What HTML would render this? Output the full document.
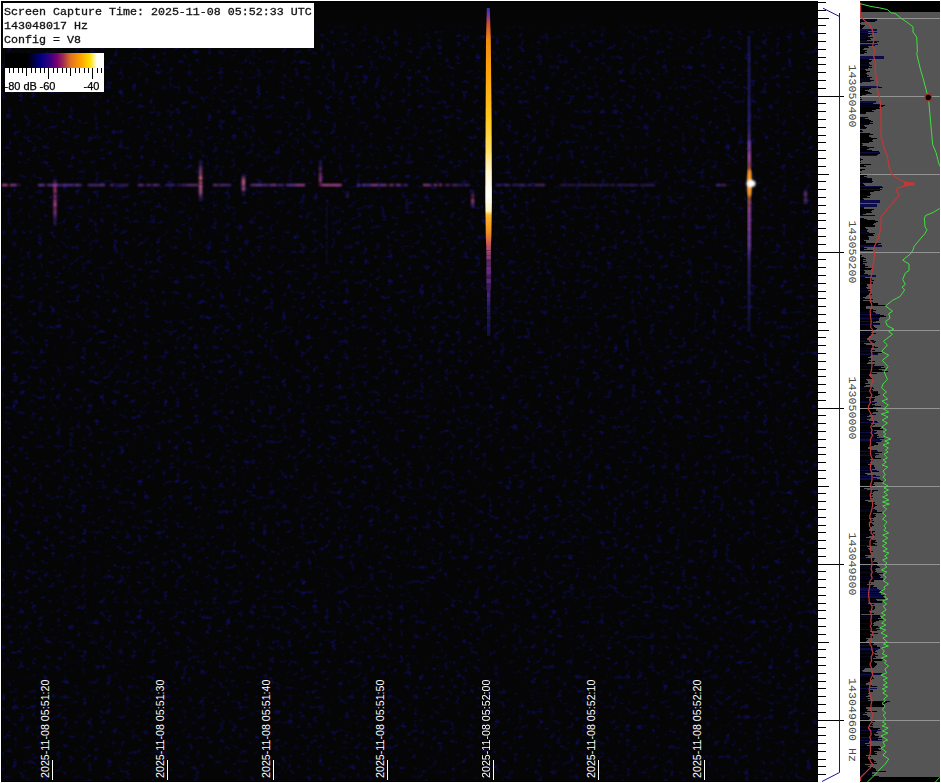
<!DOCTYPE html><html><head><meta charset="utf-8"><title>Spectrogram</title><style>html,body{margin:0;padding:0;width:941px;height:783px;overflow:hidden;background:#fff;}svg{position:absolute;left:0;top:0;display:block}.mono{font-family:"Liberation Mono",monospace}.sans{font-family:"Liberation Sans",sans-serif}</style></head><body>
<svg width="941" height="783" viewBox="0 0 941 783">
<defs><filter id="bf" x="-20%" y="-20%" width="140%" height="140%"><feGaussianBlur stdDeviation="1.0"/></filter><filter id="b1" x="-20%" y="-20%" width="140%" height="140%"><feGaussianBlur stdDeviation="0.7"/></filter><filter id="b2" x="-100%" y="-5%" width="300%" height="110%"><feGaussianBlur stdDeviation="0.9"/></filter><filter id="b3" x="-50%" y="-50%" width="200%" height="200%"><feGaussianBlur stdDeviation="1.5"/></filter><linearGradient id="cbar" x1="0" x2="1" y1="0" y2="0"><stop offset="0" stop-color="#000"/><stop offset="0.22" stop-color="#000"/><stop offset="0.36" stop-color="#000080"/><stop offset="0.46" stop-color="#3a0080"/><stop offset="0.53" stop-color="#800070"/><stop offset="0.59" stop-color="#a03050"/><stop offset="0.66" stop-color="#e07020"/><stop offset="0.76" stop-color="#ffa000"/><stop offset="0.86" stop-color="#ffe000"/><stop offset="0.93" stop-color="#fff"/><stop offset="1" stop-color="#fff"/></linearGradient><linearGradient id="streak" x1="0" x2="0" y1="0" y2="1" gradientUnits="userSpaceOnUse" ></linearGradient></defs>
<rect x="1" y="1" width="817" height="781" fill="#000"/>
<rect x="2" y="2" width="815" height="779" fill="#050506"/>
<defs><filter id="nz" x="0" y="0" width="100%" height="100%" color-interpolation-filters="sRGB"><feTurbulence type="fractalNoise" baseFrequency="0.16 0.2" numOctaves="2" seed="4" result="t"/><feColorMatrix in="t" type="matrix" values="0 0 0 0 0.05  0 0 0 0 0.05  0 0 0 0 0.37  3 0 0 0 -1.72"/><feGaussianBlur stdDeviation="0.55"/></filter></defs>
<rect x="2" y="23" width="815" height="758" filter="url(#nz)"/>
<defs><linearGradient id="fade" x1="0" y1="0" x2="0" y2="1"><stop offset="0" stop-color="#050506" stop-opacity="1"/><stop offset="1" stop-color="#050506" stop-opacity="0"/></linearGradient></defs>
<rect x="2" y="22" width="815" height="12" fill="url(#fade)"/>
<g filter="url(#bf)"><rect x="2" y="184.2" width="4" height="1.8" fill="#e058b0" opacity="1.00"/><rect x="6" y="184.2" width="2" height="1.8" fill="#e058b0" opacity="0.86"/><rect x="10" y="184.2" width="2" height="1.8" fill="#e058b0" opacity="0.93"/><rect x="12" y="184.2" width="5" height="1.8" fill="#a44ac0" opacity="0.94"/><rect x="19" y="184.2" width="1" height="1.8" fill="#5b3ad4" opacity="1.00"/><rect x="38" y="184.2" width="7" height="1.8" fill="#8644c8" opacity="0.93"/><rect x="47" y="184.2" width="5" height="1.8" fill="#723fce" opacity="0.94"/><rect x="52" y="184.2" width="6" height="1.8" fill="#b24dbc" opacity="0.77"/><rect x="58" y="184.2" width="6" height="1.8" fill="#5d3bd4" opacity="0.78"/><rect x="64" y="184.2" width="2" height="1.8" fill="#9346c5" opacity="0.92"/><rect x="66" y="184.2" width="2" height="1.8" fill="#8f46c6" opacity="0.68"/><rect x="68" y="184.2" width="6" height="1.8" fill="#673dd1" opacity="0.94"/><rect x="75" y="184.2" width="4" height="1.8" fill="#8543c9" opacity="1.00"/><rect x="79" y="184.2" width="3" height="1.8" fill="#6c3ed0" opacity="0.73"/><rect x="88" y="184.2" width="2" height="1.8" fill="#8143ca" opacity="0.77"/><rect x="90" y="184.2" width="7" height="1.8" fill="#7640cd" opacity="0.80"/><rect x="97" y="184.2" width="2" height="1.8" fill="#7c41cb" opacity="0.63"/><rect x="99" y="184.2" width="3" height="1.8" fill="#a049c1" opacity="0.73"/><rect x="102" y="184.2" width="3" height="1.8" fill="#8143ca" opacity="0.90"/><rect x="110" y="184.2" width="4" height="1.8" fill="#8c45c7" opacity="0.68"/><rect x="116" y="184.2" width="5" height="1.8" fill="#5539d6" opacity="0.52"/><rect x="121" y="184.2" width="5" height="1.8" fill="#8c45c7" opacity="0.51"/><rect x="126" y="184.2" width="2" height="1.8" fill="#8143ca" opacity="0.71"/><rect x="138" y="184.2" width="4" height="1.8" fill="#8d45c6" opacity="0.84"/><rect x="142" y="184.2" width="2" height="1.8" fill="#a14ac1" opacity="0.65"/><rect x="146" y="184.2" width="2" height="1.8" fill="#7a41cc" opacity="0.60"/><rect x="148" y="184.2" width="3" height="1.8" fill="#8f46c6" opacity="0.67"/><rect x="152" y="184.2" width="2" height="1.8" fill="#5e3bd4" opacity="0.67"/><rect x="154" y="184.2" width="3" height="1.8" fill="#9647c4" opacity="0.83"/><rect x="157" y="184.2" width="3" height="1.8" fill="#733fce" opacity="0.65"/><rect x="165" y="184.2" width="3" height="1.8" fill="#5d3ad4" opacity="0.54"/><rect x="168" y="184.2" width="7" height="1.8" fill="#643cd2" opacity="0.64"/><rect x="177" y="184.2" width="3" height="1.8" fill="#663dd1" opacity="0.49"/><rect x="181" y="184.2" width="6" height="1.8" fill="#6f3fcf" opacity="0.67"/><rect x="187" y="184.2" width="7" height="1.8" fill="#9a48c3" opacity="0.79"/><rect x="194" y="184.2" width="4" height="1.8" fill="#9d49c2" opacity="0.74"/><rect x="213" y="184.2" width="5" height="1.8" fill="#8944c8" opacity="0.82"/><rect x="219" y="184.2" width="7" height="1.8" fill="#8944c7" opacity="0.73"/><rect x="226" y="184.2" width="5" height="1.8" fill="#673dd1" opacity="0.79"/><rect x="250" y="184.2" width="2" height="1.8" fill="#5038d7" opacity="0.80"/><rect x="252" y="184.2" width="4" height="1.8" fill="#a84bbf" opacity="0.76"/><rect x="256" y="184.2" width="6" height="1.8" fill="#8644c8" opacity="1.00"/><rect x="262" y="184.2" width="6" height="1.8" fill="#8443c9" opacity="0.79"/><rect x="269" y="184.2" width="5" height="1.8" fill="#9547c4" opacity="0.88"/><rect x="274" y="184.2" width="2" height="1.8" fill="#bb4fba" opacity="1.00"/><rect x="277" y="184.2" width="7" height="1.8" fill="#673dd1" opacity="0.74"/><rect x="286" y="184.2" width="4" height="1.8" fill="#653cd2" opacity="0.99"/><rect x="290" y="184.2" width="6" height="1.8" fill="#7a41cc" opacity="1.00"/><rect x="296" y="184.2" width="7" height="1.8" fill="#c953b6" opacity="0.98"/><rect x="303" y="184.2" width="2" height="1.8" fill="#bf50b9" opacity="0.99"/><rect x="322" y="184.2" width="4" height="1.8" fill="#e058b0" opacity="1.00"/><rect x="326" y="184.2" width="3" height="1.8" fill="#e058b0" opacity="1.00"/><rect x="329" y="184.2" width="3" height="1.8" fill="#c752b6" opacity="1.00"/><rect x="332" y="184.2" width="2" height="1.8" fill="#e058b0" opacity="1.00"/><rect x="334" y="184.2" width="7" height="1.8" fill="#db56b1" opacity="1.00"/><rect x="341" y="184.2" width="1" height="1.8" fill="#623cd2" opacity="0.87"/><rect x="357" y="184.2" width="3" height="1.8" fill="#7b41cb" opacity="0.91"/><rect x="362" y="184.2" width="2" height="1.8" fill="#8e45c6" opacity="0.99"/><rect x="364" y="184.2" width="7" height="1.8" fill="#5f3bd3" opacity="0.87"/><rect x="371" y="184.2" width="5" height="1.8" fill="#c351b7" opacity="0.89"/><rect x="376" y="184.2" width="2" height="1.8" fill="#b74fbb" opacity="1.00"/><rect x="379" y="184.2" width="5" height="1.8" fill="#8443c9" opacity="1.00"/><rect x="384" y="184.2" width="3" height="1.8" fill="#d054b4" opacity="0.70"/><rect x="389" y="184.2" width="5" height="1.8" fill="#b84fba" opacity="0.76"/><rect x="396" y="184.2" width="5" height="1.8" fill="#a54ac0" opacity="0.85"/><rect x="403" y="184.2" width="5" height="1.8" fill="#603bd3" opacity="0.70"/><rect x="423" y="184.2" width="6" height="1.8" fill="#e058b0" opacity="0.80"/><rect x="429" y="184.2" width="3" height="1.8" fill="#5539d6" opacity="0.83"/><rect x="434" y="184.2" width="3" height="1.8" fill="#e058b0" opacity="0.89"/><rect x="439" y="184.2" width="3" height="1.8" fill="#e058b0" opacity="0.76"/><rect x="445" y="184.2" width="5" height="1.8" fill="#8944c8" opacity="0.63"/><rect x="452" y="184.2" width="5" height="1.8" fill="#9747c4" opacity="0.64"/><rect x="457" y="184.2" width="6" height="1.8" fill="#5d3ad4" opacity="0.54"/><rect x="464" y="184.2" width="3" height="1.8" fill="#8443c9" opacity="0.61"/><rect x="467" y="184.2" width="3" height="1.8" fill="#5c3ad4" opacity="0.57"/><rect x="496" y="184.2" width="6" height="1.8" fill="#5539d6" opacity="0.65"/><rect x="504" y="184.2" width="6" height="1.8" fill="#7941cc" opacity="0.68"/><rect x="512" y="184.2" width="2" height="1.8" fill="#653cd2" opacity="0.53"/><rect x="514" y="184.2" width="6" height="1.8" fill="#7740cd" opacity="0.45"/><rect x="520" y="184.2" width="5" height="1.8" fill="#6c3ed0" opacity="0.73"/><rect x="527" y="184.2" width="6" height="1.8" fill="#613bd3" opacity="0.53"/><rect x="535" y="184.2" width="6" height="1.8" fill="#9547c4" opacity="0.60"/><rect x="541" y="184.2" width="4" height="1.8" fill="#7d42cb" opacity="0.71"/><rect x="560" y="184.2" width="6" height="1.8" fill="#9046c6" opacity="0.37"/><rect x="567" y="184.2" width="3" height="1.8" fill="#6d3ecf" opacity="0.41"/><rect x="570" y="184.2" width="2" height="1.8" fill="#8042ca" opacity="0.42"/><rect x="572" y="184.2" width="7" height="1.8" fill="#653cd1" opacity="0.35"/><rect x="579" y="184.2" width="7" height="1.8" fill="#7e42cb" opacity="0.40"/><rect x="586" y="184.2" width="3" height="1.8" fill="#9547c4" opacity="0.37"/><rect x="589" y="184.2" width="5" height="1.8" fill="#8f46c6" opacity="0.36"/><rect x="594" y="184.2" width="3" height="1.8" fill="#8243c9" opacity="0.54"/><rect x="598" y="184.2" width="4" height="1.8" fill="#6e3ecf" opacity="0.40"/><rect x="602" y="184.2" width="7" height="1.8" fill="#6a3dd0" opacity="0.40"/><rect x="610" y="184.2" width="5" height="1.8" fill="#8243c9" opacity="0.41"/><rect x="617" y="184.2" width="6" height="1.8" fill="#653cd2" opacity="0.53"/><rect x="623" y="184.2" width="3" height="1.8" fill="#9547c4" opacity="0.35"/><rect x="626" y="184.2" width="4" height="1.8" fill="#5238d7" opacity="0.49"/><rect x="630" y="184.2" width="3" height="1.8" fill="#8b45c7" opacity="0.51"/><rect x="633" y="184.2" width="5" height="1.8" fill="#5a3ad5" opacity="0.52"/><rect x="640" y="184.2" width="5" height="1.8" fill="#8243c9" opacity="0.34"/><rect x="645" y="184.2" width="7" height="1.8" fill="#5d3ad4" opacity="0.52"/><rect x="652" y="184.2" width="2" height="1.8" fill="#7d42cb" opacity="0.50"/><rect x="654" y="184.2" width="1" height="1.8" fill="#8d45c6" opacity="0.34"/><rect x="716" y="184.2" width="5" height="1.8" fill="#5138d7" opacity="0.94"/><rect x="722" y="184.2" width="4" height="1.8" fill="#a94bbf" opacity="0.58"/><rect x="53.6" y="179" width="2.8" height="1" fill="#3434c8" opacity="0.47"/><rect x="53.6" y="180" width="2.8" height="1" fill="#4f38c4" opacity="0.37"/><rect x="53.6" y="181" width="2.8" height="2" fill="#6a3dc0" opacity="0.51"/><rect x="53.6" y="183" width="2.8" height="2" fill="#a146b8" opacity="0.62"/><rect x="53.6" y="185" width="2.8" height="2" fill="#d850b0" opacity="0.70"/><rect x="53.6" y="187" width="2.8" height="2" fill="#d850b0" opacity="0.58"/><rect x="53.6" y="189" width="2.8" height="2" fill="#d850b0" opacity="0.77"/><rect x="53.6" y="191" width="2.8" height="3" fill="#d850b0" opacity="0.61"/><rect x="53.6" y="195" width="2.8" height="3" fill="#d850b0" opacity="0.78"/><rect x="53.6" y="199" width="2.8" height="2" fill="#d850b0" opacity="0.83"/><rect x="53.6" y="201" width="2.8" height="2" fill="#d850b0" opacity="0.65"/><rect x="53.6" y="203" width="2.8" height="3" fill="#d850b0" opacity="0.95"/><rect x="53.6" y="206" width="2.8" height="2" fill="#cf4eb1" opacity="0.56"/><rect x="53.6" y="208" width="2.8" height="3" fill="#bf4bb3" opacity="0.58"/><rect x="53.6" y="211" width="2.8" height="3" fill="#a647b7" opacity="0.77"/><rect x="53.6" y="214" width="2.8" height="2" fill="#8e43ba" opacity="0.65"/><rect x="53.6" y="216" width="2.8" height="3" fill="#7d40bd" opacity="0.46"/><rect x="53.6" y="219" width="2.8" height="3" fill="#653cc0" opacity="0.37"/><rect x="53.6" y="222" width="2.8" height="2" fill="#4c38c4" opacity="0.54"/><rect x="53.6" y="224" width="2.8" height="2" fill="#3c35c6" opacity="0.31"/><rect x="199.0" y="160" width="3.2" height="2" fill="#3434c8" opacity="0.37"/><rect x="199.0" y="162" width="3.2" height="2" fill="#4d3cc2" opacity="0.43"/><rect x="199.0" y="165" width="3.2" height="2" fill="#7248ba" opacity="0.53"/><rect x="199.0" y="167" width="3.2" height="2" fill="#8b50b5" opacity="0.59"/><rect x="199.0" y="169" width="3.2" height="1" fill="#a458b0" opacity="0.56"/><rect x="199.0" y="170" width="3.2" height="2" fill="#b15cad" opacity="0.63"/><rect x="199.0" y="172" width="3.2" height="3" fill="#ca64a8" opacity="0.55"/><rect x="199.0" y="175" width="3.2" height="2" fill="#f070a0" opacity="0.63"/><rect x="199.0" y="177" width="3.2" height="3" fill="#f070a0" opacity="0.91"/><rect x="199.0" y="181" width="3.2" height="2" fill="#f070a0" opacity="0.71"/><rect x="199.0" y="183" width="3.2" height="1" fill="#f070a0" opacity="0.93"/><rect x="199.0" y="185" width="3.2" height="2" fill="#f070a0" opacity="0.96"/><rect x="199.0" y="187" width="3.2" height="2" fill="#f070a0" opacity="0.63"/><rect x="199.0" y="189" width="3.2" height="2" fill="#d567a5" opacity="0.79"/><rect x="199.0" y="191" width="3.2" height="3" fill="#ba5eab" opacity="0.80"/><rect x="199.0" y="194" width="3.2" height="1" fill="#9252b4" opacity="0.64"/><rect x="199.0" y="195" width="3.2" height="3" fill="#844db6" opacity="0.50"/><rect x="199.0" y="199" width="3.2" height="1" fill="#4e3cc2" opacity="0.51"/><rect x="199.0" y="200" width="3.2" height="1" fill="#4138c5" opacity="0.48"/><rect x="208.1" y="130" width="1.0" height="2" fill="#3434c8" opacity="0.14"/><rect x="208.1" y="132" width="1.0" height="2" fill="#3434c8" opacity="0.13"/><rect x="208.1" y="134" width="1.0" height="2" fill="#3434c8" opacity="0.13"/><rect x="208.1" y="137" width="1.0" height="3" fill="#3434c8" opacity="0.14"/><rect x="208.1" y="140" width="1.0" height="3" fill="#3434c8" opacity="0.14"/><rect x="208.1" y="143" width="1.0" height="1" fill="#3434c8" opacity="0.13"/><rect x="208.1" y="144" width="1.0" height="1" fill="#3434c8" opacity="0.13"/><rect x="208.1" y="145" width="1.0" height="2" fill="#3434c8" opacity="0.13"/><rect x="208.1" y="147" width="1.0" height="2" fill="#3434c8" opacity="0.09"/><rect x="208.1" y="149" width="1.0" height="3" fill="#3434c8" opacity="0.11"/><rect x="208.1" y="152" width="1.0" height="2" fill="#3434c8" opacity="0.13"/><rect x="208.1" y="154" width="1.0" height="2" fill="#3434c8" opacity="0.12"/><rect x="208.1" y="157" width="1.0" height="1" fill="#3434c8" opacity="0.15"/><rect x="208.1" y="158" width="1.0" height="2" fill="#3434c8" opacity="0.15"/><rect x="208.1" y="161" width="1.0" height="1" fill="#3434c8" opacity="0.11"/><rect x="208.1" y="162" width="1.0" height="3" fill="#3434c8" opacity="0.15"/><rect x="208.1" y="166" width="1.0" height="2" fill="#3434c8" opacity="0.14"/><rect x="208.1" y="168" width="1.0" height="1" fill="#3434c8" opacity="0.12"/><rect x="208.1" y="169" width="1.0" height="2" fill="#3434c8" opacity="0.15"/><rect x="208.1" y="171" width="1.0" height="2" fill="#3434c8" opacity="0.14"/><rect x="208.1" y="173" width="1.0" height="2" fill="#3434c8" opacity="0.12"/><rect x="208.1" y="176" width="1.0" height="3" fill="#3434c8" opacity="0.09"/><rect x="208.1" y="179" width="1.0" height="3" fill="#3434c8" opacity="0.13"/><rect x="208.1" y="183" width="1.0" height="2" fill="#3434c8" opacity="0.13"/><rect x="208.1" y="186" width="1.0" height="2" fill="#3434c8" opacity="0.11"/><rect x="208.1" y="188" width="1.0" height="2" fill="#3434c8" opacity="0.09"/><rect x="208.1" y="190" width="1.0" height="3" fill="#3434c8" opacity="0.10"/><rect x="208.1" y="193" width="1.0" height="1" fill="#3434c8" opacity="0.14"/><rect x="208.1" y="194" width="1.0" height="2" fill="#3434c8" opacity="0.11"/><rect x="208.1" y="197" width="1.0" height="3" fill="#3434c8" opacity="0.15"/><rect x="208.1" y="200" width="1.0" height="2" fill="#3434c8" opacity="0.15"/><rect x="208.1" y="202" width="1.0" height="1" fill="#3434c8" opacity="0.11"/><rect x="208.1" y="203" width="1.0" height="2" fill="#3434c8" opacity="0.13"/><rect x="208.1" y="205" width="1.0" height="2" fill="#3434c8" opacity="0.15"/><rect x="208.1" y="208" width="1.0" height="2" fill="#3434c8" opacity="0.10"/><rect x="208.1" y="210" width="1.0" height="3" fill="#3434c8" opacity="0.14"/><rect x="208.1" y="214" width="1.0" height="2" fill="#3434c8" opacity="0.13"/><rect x="208.1" y="216" width="1.0" height="3" fill="#3434c8" opacity="0.12"/><rect x="208.1" y="219" width="1.0" height="2" fill="#3434c8" opacity="0.12"/><rect x="208.1" y="221" width="1.0" height="2" fill="#3434c8" opacity="0.12"/><rect x="208.1" y="223" width="1.0" height="2" fill="#3434c8" opacity="0.11"/><rect x="208.1" y="225" width="1.0" height="3" fill="#3434c8" opacity="0.13"/><rect x="208.1" y="228" width="1.0" height="3" fill="#3434c8" opacity="0.12"/><rect x="208.1" y="232" width="1.0" height="1" fill="#3434c8" opacity="0.10"/><rect x="208.1" y="233" width="1.0" height="1" fill="#3434c8" opacity="0.10"/><rect x="208.1" y="235" width="1.0" height="2" fill="#3434c8" opacity="0.12"/><rect x="208.1" y="237" width="1.0" height="3" fill="#3434c8" opacity="0.12"/><rect x="208.1" y="240" width="1.0" height="2" fill="#3434c8" opacity="0.10"/><rect x="208.1" y="242" width="1.0" height="1" fill="#3434c8" opacity="0.11"/><rect x="208.1" y="243" width="1.0" height="2" fill="#3434c8" opacity="0.14"/><rect x="208.1" y="245" width="1.0" height="1" fill="#3434c8" opacity="0.13"/><rect x="208.1" y="247" width="1.0" height="3" fill="#3434c8" opacity="0.11"/><rect x="241.9" y="174" width="3.2" height="3" fill="#3434c8" opacity="0.35"/><rect x="241.9" y="177" width="3.2" height="3" fill="#c161aa" opacity="0.62"/><rect x="241.9" y="180" width="3.2" height="2" fill="#f070a0" opacity="0.87"/><rect x="241.9" y="182" width="3.2" height="1" fill="#f070a0" opacity="0.71"/><rect x="241.9" y="183" width="3.2" height="3" fill="#f070a0" opacity="0.76"/><rect x="241.9" y="187" width="3.2" height="3" fill="#c662a8" opacity="0.87"/><rect x="241.9" y="190" width="3.2" height="2" fill="#874eb6" opacity="0.44"/><rect x="241.9" y="193" width="3.2" height="3" fill="#483ac3" opacity="0.33"/><rect x="319.1" y="160" width="2.6" height="3" fill="#3434c8" opacity="0.45"/><rect x="319.1" y="163" width="2.6" height="1" fill="#5239c3" opacity="0.37"/><rect x="319.1" y="164" width="2.6" height="1" fill="#5d3bc2" opacity="0.55"/><rect x="319.1" y="166" width="2.6" height="1" fill="#713ebf" opacity="0.51"/><rect x="319.1" y="167" width="2.6" height="1" fill="#7b40bd" opacity="0.59"/><rect x="319.1" y="168" width="2.6" height="1" fill="#8642bc" opacity="0.58"/><rect x="319.1" y="169" width="2.6" height="2" fill="#9043ba" opacity="0.60"/><rect x="319.1" y="172" width="2.6" height="1" fill="#af49b6" opacity="0.50"/><rect x="319.1" y="173" width="2.6" height="2" fill="#b94ab4" opacity="0.62"/><rect x="319.1" y="175" width="2.6" height="1" fill="#cd4eb1" opacity="0.53"/><rect x="319.1" y="176" width="2.6" height="3" fill="#d850b0" opacity="0.64"/><rect x="319.1" y="179" width="2.6" height="2" fill="#d850b0" opacity="0.71"/><rect x="319.1" y="181" width="2.6" height="2" fill="#d850b0" opacity="0.55"/><rect x="319.1" y="184" width="2.6" height="2" fill="#d850b0" opacity="0.56"/><rect x="325.7" y="200" width="2.0" height="3" fill="#3434c8" opacity="0.21"/><rect x="325.7" y="204" width="2.0" height="1" fill="#3434c8" opacity="0.16"/><rect x="325.7" y="206" width="2.0" height="2" fill="#3434c8" opacity="0.16"/><rect x="325.7" y="208" width="2.0" height="2" fill="#3434c8" opacity="0.20"/><rect x="325.7" y="210" width="2.0" height="3" fill="#3434c8" opacity="0.15"/><rect x="325.7" y="213" width="2.0" height="1" fill="#3434c8" opacity="0.15"/><rect x="325.7" y="214" width="2.0" height="2" fill="#3434c8" opacity="0.20"/><rect x="325.7" y="216" width="2.0" height="2" fill="#3434c8" opacity="0.18"/><rect x="325.7" y="218" width="2.0" height="2" fill="#3434c8" opacity="0.14"/><rect x="325.7" y="221" width="2.0" height="2" fill="#3434c8" opacity="0.22"/><rect x="325.7" y="224" width="2.0" height="3" fill="#3434c8" opacity="0.22"/><rect x="325.7" y="227" width="2.0" height="2" fill="#3434c8" opacity="0.22"/><rect x="325.7" y="229" width="2.0" height="2" fill="#3434c8" opacity="0.14"/><rect x="325.7" y="231" width="2.0" height="3" fill="#3434c8" opacity="0.14"/><rect x="325.7" y="234" width="2.0" height="2" fill="#3434c8" opacity="0.17"/><rect x="325.7" y="236" width="2.0" height="1" fill="#3434c8" opacity="0.22"/><rect x="325.7" y="237" width="2.0" height="2" fill="#3434c8" opacity="0.15"/><rect x="325.7" y="240" width="2.0" height="1" fill="#3434c8" opacity="0.16"/><rect x="325.7" y="242" width="2.0" height="2" fill="#3434c8" opacity="0.22"/><rect x="325.7" y="245" width="2.0" height="2" fill="#3434c8" opacity="0.14"/><rect x="325.7" y="247" width="2.0" height="2" fill="#3434c8" opacity="0.14"/><rect x="325.7" y="250" width="2.0" height="1" fill="#3434c8" opacity="0.19"/><rect x="325.7" y="251" width="2.0" height="3" fill="#3434c8" opacity="0.17"/><rect x="325.7" y="254" width="2.0" height="3" fill="#3434c8" opacity="0.14"/><rect x="325.7" y="258" width="2.0" height="2" fill="#3434c8" opacity="0.17"/><rect x="325.7" y="261" width="2.0" height="2" fill="#3434c8" opacity="0.16"/><rect x="346.2" y="191" width="2.5" height="1" fill="#3434c8" opacity="0.30"/><rect x="346.2" y="192" width="2.5" height="3" fill="#4a36c0" opacity="0.32"/><rect x="346.2" y="195" width="2.5" height="3" fill="#6038b8" opacity="0.44"/><rect x="405.4" y="199" width="2.5" height="2" fill="#3434c8" opacity="0.20"/><rect x="405.4" y="201" width="2.5" height="2" fill="#3434c8" opacity="0.22"/><rect x="405.4" y="203" width="2.5" height="1" fill="#3434c8" opacity="0.21"/><rect x="405.4" y="204" width="2.5" height="2" fill="#3434c8" opacity="0.22"/><rect x="405.4" y="206" width="2.5" height="1" fill="#3434c8" opacity="0.28"/><rect x="405.4" y="207" width="2.5" height="3" fill="#3434c8" opacity="0.27"/><rect x="471.3" y="190" width="2.8" height="3" fill="#3434c8" opacity="0.44"/><rect x="471.3" y="194" width="2.8" height="3" fill="#b74ab4" opacity="0.56"/><rect x="471.3" y="198" width="2.8" height="2" fill="#d850b0" opacity="0.57"/><rect x="471.3" y="200" width="2.8" height="2" fill="#d850b0" opacity="0.80"/><rect x="471.3" y="202" width="2.8" height="2" fill="#a948b6" opacity="0.64"/><rect x="471.3" y="204" width="2.8" height="2" fill="#7a40bd" opacity="0.51"/><rect x="471.3" y="206" width="2.8" height="2" fill="#4b38c4" opacity="0.41"/><rect x="804.0" y="189" width="3.0" height="3" fill="#3434c8" opacity="0.37"/><rect x="804.0" y="192" width="3.0" height="2" fill="#7f43b6" opacity="0.78"/><rect x="804.0" y="194" width="3.0" height="1" fill="#9848b0" opacity="0.64"/><rect x="804.0" y="195" width="3.0" height="2" fill="#9848b0" opacity="0.57"/><rect x="804.0" y="198" width="3.0" height="3" fill="#9848b0" opacity="0.60"/><rect x="804.0" y="201" width="3.0" height="3" fill="#5c3cbe" opacity="0.49"/></g>
<defs><linearGradient id="g1" x1="0" y1="8" x2="0" y2="336" gradientUnits="userSpaceOnUse"><stop offset="0.0000" stop-color="#3030b0"/><stop offset="0.0183" stop-color="#7030a0"/><stop offset="0.0488" stop-color="#d05030"/><stop offset="0.0976" stop-color="#f08a10"/><stop offset="0.2195" stop-color="#ffa810"/><stop offset="0.3415" stop-color="#ffc820"/><stop offset="0.4329" stop-color="#ffe060"/><stop offset="0.5000" stop-color="#fff8d0"/><stop offset="0.5701" stop-color="#ffffff"/><stop offset="0.6189" stop-color="#fff4c0"/><stop offset="0.6311" stop-color="#ffb828"/><stop offset="0.6829" stop-color="#f09020"/><stop offset="0.7256" stop-color="#c05060"/><stop offset="0.7561" stop-color="#9038a0"/><stop offset="0.8049" stop-color="#8030a0"/><stop offset="0.8902" stop-color="#4a2ab0"/><stop offset="1.0000" stop-color="#1c1c90"/></linearGradient><linearGradient id="g2" x1="0" y1="36" x2="0" y2="332" gradientUnits="userSpaceOnUse"><stop offset="0.0000" stop-color="#202090"/><stop offset="0.3176" stop-color="#4030b0"/><stop offset="0.3750" stop-color="#8040b0"/><stop offset="0.4426" stop-color="#d06040"/><stop offset="0.4966" stop-color="#ffc040"/><stop offset="0.5473" stop-color="#d06040"/><stop offset="0.6993" stop-color="#8040b0"/><stop offset="0.7635" stop-color="#5030b0"/><stop offset="1.0000" stop-color="#202090"/></linearGradient></defs>
<g filter="url(#b1)"><path d="M486.8 8 L489.8 8 L490.8 40 L491.6 120 L491.9 200 L491.4 236 L490.8 250 L486.4 250 L485.8 236 L485.3 200 L485.6 120 L486 40 Z" fill="url(#g1)"/></g>
<g filter="url(#bf)"><rect x="748.1" y="36" width="2" height="1" fill="#3434d0" opacity="0.56"/><rect x="748.1" y="37" width="2" height="2" fill="#3434d0" opacity="0.47"/><rect x="748.1" y="39" width="2" height="2" fill="#3434d0" opacity="0.49"/><rect x="748.1" y="41" width="2" height="2" fill="#3534d0" opacity="0.46"/><rect x="748.1" y="43" width="2" height="2" fill="#3534d1" opacity="0.46"/><rect x="748.1" y="45" width="2" height="2" fill="#3634d1" opacity="0.46"/><rect x="748.1" y="47" width="2" height="2" fill="#3634d2" opacity="0.49"/><rect x="748.1" y="49" width="2" height="3" fill="#3734d2" opacity="0.48"/><rect x="748.1" y="52" width="2" height="2" fill="#3835d3" opacity="0.54"/><rect x="748.1" y="54" width="2" height="2" fill="#3835d3" opacity="0.57"/><rect x="748.1" y="56" width="2" height="1" fill="#3935d3" opacity="0.57"/><rect x="748.1" y="57" width="2" height="1" fill="#3935d4" opacity="0.47"/><rect x="748.1" y="58" width="2" height="3" fill="#3935d4" opacity="0.62"/><rect x="748.1" y="61" width="2" height="2" fill="#3a35d4" opacity="0.61"/><rect x="748.1" y="63" width="2" height="2" fill="#3b35d5" opacity="0.46"/><rect x="748.1" y="65" width="2" height="2" fill="#3b36d5" opacity="0.50"/><rect x="748.1" y="67" width="2" height="1" fill="#3c36d5" opacity="0.50"/><rect x="748.1" y="68" width="2" height="2" fill="#3c36d6" opacity="0.64"/><rect x="748.1" y="70" width="2" height="2" fill="#3c36d6" opacity="0.56"/><rect x="748.1" y="72" width="2" height="2" fill="#3d36d6" opacity="0.55"/><rect x="748.1" y="74" width="2" height="2" fill="#3d36d7" opacity="0.62"/><rect x="748.1" y="76" width="2" height="1" fill="#3e36d7" opacity="0.49"/><rect x="748.1" y="77" width="2" height="2" fill="#3e36d7" opacity="0.52"/><rect x="748.1" y="79" width="2" height="2" fill="#3f37d8" opacity="0.54"/><rect x="748.1" y="81" width="2" height="1" fill="#3f37d8" opacity="0.52"/><rect x="748.1" y="82" width="2" height="2" fill="#4037d8" opacity="0.49"/><rect x="748.1" y="84" width="2" height="2" fill="#4037d9" opacity="0.65"/><rect x="748.1" y="86" width="2" height="2" fill="#4137d9" opacity="0.57"/><rect x="748.1" y="88" width="2" height="2" fill="#4137d9" opacity="0.52"/><rect x="748.1" y="90" width="2" height="2" fill="#4237da" opacity="0.50"/><rect x="748.1" y="92" width="2" height="1" fill="#4238da" opacity="0.66"/><rect x="748.1" y="93" width="2" height="3" fill="#4238da" opacity="0.50"/><rect x="748.1" y="96" width="2" height="1" fill="#4338db" opacity="0.66"/><rect x="748.1" y="97" width="2" height="2" fill="#4338db" opacity="0.63"/><rect x="748.1" y="99" width="2" height="1" fill="#4438dc" opacity="0.64"/><rect x="748.1" y="100" width="2" height="3" fill="#4438dc" opacity="0.65"/><rect x="748.1" y="103" width="2" height="3" fill="#4538dc" opacity="0.72"/><rect x="748.1" y="106" width="2" height="2" fill="#4639dd" opacity="0.60"/><rect x="748.1" y="108" width="2" height="1" fill="#4639dd" opacity="0.58"/><rect x="748.1" y="109" width="2" height="2" fill="#4739dd" opacity="0.60"/><rect x="748.1" y="111" width="2" height="1" fill="#4739de" opacity="0.70"/><rect x="748.1" y="112" width="2" height="2" fill="#4739de" opacity="0.66"/><rect x="748.1" y="114" width="2" height="3" fill="#4839de" opacity="0.68"/><rect x="748.1" y="117" width="2" height="2" fill="#4939df" opacity="0.73"/><rect x="748.1" y="119" width="2" height="3" fill="#4939df" opacity="0.73"/><rect x="748.1" y="122" width="2" height="3" fill="#513cdf" opacity="0.57"/><rect x="748.1" y="125" width="2" height="1" fill="#5b3fde" opacity="0.67"/><rect x="748.1" y="126" width="2" height="2" fill="#5f40dd" opacity="0.69"/><rect x="748.1" y="128" width="2" height="2" fill="#6642dc" opacity="0.63"/><rect x="748.1" y="130" width="2" height="1" fill="#6d45dc" opacity="0.76"/><rect x="748.1" y="131" width="2" height="3" fill="#7046db" opacity="0.64"/><rect x="748.1" y="134" width="2" height="2" fill="#7b49da" opacity="0.85"/><rect x="748.1" y="136" width="2" height="2" fill="#824bd9" opacity="0.71"/><rect x="748.1" y="138" width="2" height="2" fill="#894dd8" opacity="0.73"/><rect x="748.1" y="140" width="2" height="2" fill="#9050d8" opacity="0.98"/><rect x="747.7" y="142" width="3" height="1" fill="#9651d5" opacity="0.82"/><rect x="747.7" y="143" width="3" height="2" fill="#9952d4" opacity="0.79"/><rect x="747.7" y="145" width="3" height="1" fill="#a054d2" opacity="0.99"/><rect x="747.7" y="146" width="3" height="3" fill="#a354d0" opacity="0.79"/><rect x="747.7" y="149" width="3" height="3" fill="#ac57cd" opacity="0.73"/><rect x="747.7" y="152" width="3" height="2" fill="#b659c9" opacity="0.89"/><rect x="747.7" y="154" width="3" height="2" fill="#bc5bc7" opacity="0.89"/><rect x="747.7" y="156" width="3" height="2" fill="#c35cc4" opacity="0.95"/><rect x="747.7" y="158" width="3" height="2" fill="#c95ec2" opacity="0.87"/><rect x="747.7" y="160" width="3" height="1" fill="#d060c0" opacity="0.82"/><rect x="747.7" y="161" width="3" height="2" fill="#d161b3" opacity="0.82"/><rect x="747.7" y="163" width="3" height="1" fill="#d46499" opacity="0.74"/><rect x="747.7" y="164" width="3" height="2" fill="#d6668c" opacity="0.71"/><rect x="747.7" y="166" width="3" height="1" fill="#d96973" opacity="0.90"/><rect x="747.7" y="167" width="3" height="2" fill="#db6b66" opacity="0.74"/><rect x="747.7" y="169" width="3" height="3" fill="#de6e4c" opacity="0.87"/><rect x="747.7" y="172" width="3" height="2" fill="#e47c40" opacity="0.89"/><rect x="747.7" y="174" width="3" height="2" fill="#e98840" opacity="0.87"/><rect x="747.7" y="176" width="3" height="3" fill="#ee9440" opacity="0.82"/><rect x="747.7" y="179" width="3" height="2" fill="#f5a740" opacity="0.83"/><rect x="747.7" y="181" width="3" height="3" fill="#fab340" opacity="0.75"/><rect x="747.7" y="184" width="3" height="1" fill="#fcb940" opacity="0.89"/><rect x="747.7" y="185" width="3" height="3" fill="#fab340" opacity="0.84"/><rect x="747.7" y="188" width="3" height="3" fill="#f3a140" opacity="0.93"/><rect x="747.7" y="191" width="3" height="3" fill="#eb8e40" opacity="0.95"/><rect x="747.7" y="194" width="3" height="3" fill="#e47c40" opacity="0.82"/><rect x="747.7" y="197" width="3" height="1" fill="#dd6e49" opacity="0.74"/><rect x="747.7" y="198" width="3" height="3" fill="#db6c53" opacity="0.81"/><rect x="747.7" y="201" width="3" height="3" fill="#d46770" opacity="0.85"/><rect x="747.7" y="204" width="3" height="1" fill="#cd628d" opacity="0.71"/><rect x="747.7" y="205" width="3" height="2" fill="#cb6097" opacity="0.72"/><rect x="747.7" y="207" width="3" height="2" fill="#c65daa" opacity="0.93"/><rect x="747.7" y="209" width="3" height="1" fill="#c259be" opacity="0.72"/><rect x="747.7" y="210" width="3" height="3" fill="#c058c8" opacity="0.90"/><rect x="747.7" y="213" width="3" height="2" fill="#bb57c9" opacity="0.71"/><rect x="747.7" y="215" width="3" height="1" fill="#b956ca" opacity="1.00"/><rect x="747.7" y="216" width="3" height="1" fill="#b756ca" opacity="0.76"/><rect x="747.7" y="217" width="3" height="3" fill="#b656cb" opacity="0.79"/><rect x="747.7" y="220" width="3" height="2" fill="#b255cc" opacity="0.91"/><rect x="747.7" y="222" width="3" height="2" fill="#af55cd" opacity="0.72"/><rect x="747.7" y="224" width="3" height="2" fill="#ac54ce" opacity="0.88"/><rect x="747.7" y="226" width="3" height="2" fill="#aa54cf" opacity="0.75"/><rect x="747.7" y="228" width="3" height="2" fill="#a753d0" opacity="0.97"/><rect x="747.7" y="230" width="3" height="3" fill="#a453d1" opacity="0.74"/><rect x="747.7" y="233" width="3" height="3" fill="#a052d2" opacity="0.76"/><rect x="747.7" y="236" width="3" height="2" fill="#9c52d3" opacity="0.88"/><rect x="747.7" y="238" width="3" height="2" fill="#9951d4" opacity="0.80"/><rect x="747.7" y="240" width="3" height="1" fill="#9651d5" opacity="0.76"/><rect x="747.7" y="241" width="3" height="3" fill="#9550d6" opacity="0.75"/><rect x="747.7" y="244" width="3" height="2" fill="#9150d7" opacity="0.90"/><rect x="747.7" y="246" width="3" height="3" fill="#8c4fd7" opacity="0.74"/><rect x="747.7" y="249" width="3" height="2" fill="#834cd6" opacity="0.70"/><rect x="748.1" y="251" width="2" height="1" fill="#7c4ad5" opacity="0.83"/><rect x="748.1" y="252" width="2" height="2" fill="#7949d4" opacity="0.91"/><rect x="748.1" y="254" width="2" height="3" fill="#7347d3" opacity="0.77"/><rect x="748.1" y="257" width="2" height="1" fill="#6944d2" opacity="0.67"/><rect x="748.1" y="258" width="2" height="3" fill="#6643d1" opacity="0.78"/><rect x="748.1" y="261" width="2" height="2" fill="#5d40d0" opacity="0.63"/><rect x="748.1" y="263" width="2" height="2" fill="#593fcf" opacity="0.69"/><rect x="748.1" y="265" width="2" height="2" fill="#573ece" opacity="0.63"/><rect x="748.1" y="267" width="2" height="1" fill="#563ecd" opacity="0.65"/><rect x="748.1" y="268" width="2" height="2" fill="#553dcd" opacity="0.68"/><rect x="748.1" y="270" width="2" height="1" fill="#543dcc" opacity="0.60"/><rect x="748.1" y="271" width="2" height="2" fill="#533ccb" opacity="0.60"/><rect x="748.1" y="273" width="2" height="2" fill="#523cca" opacity="0.69"/><rect x="748.1" y="275" width="2" height="1" fill="#503bca" opacity="0.56"/><rect x="748.1" y="276" width="2" height="2" fill="#503bc9" opacity="0.65"/><rect x="748.1" y="278" width="2" height="3" fill="#4e3ac8" opacity="0.59"/><rect x="748.1" y="281" width="2" height="2" fill="#4c39c7" opacity="0.68"/><rect x="748.1" y="283" width="2" height="2" fill="#4b38c6" opacity="0.59"/><rect x="748.1" y="285" width="2" height="1" fill="#4938c5" opacity="0.48"/><rect x="748.1" y="286" width="2" height="1" fill="#4837c5" opacity="0.59"/><rect x="748.1" y="287" width="2" height="2" fill="#4837c4" opacity="0.49"/><rect x="748.1" y="289" width="2" height="2" fill="#4636c3" opacity="0.57"/><rect x="748.1" y="291" width="2" height="3" fill="#4536c2" opacity="0.57"/><rect x="748.1" y="294" width="2" height="2" fill="#4335c1" opacity="0.49"/><rect x="748.1" y="296" width="2" height="3" fill="#4134c0" opacity="0.47"/><rect x="748.1" y="299" width="2" height="1" fill="#3f33bf" opacity="0.60"/><rect x="748.1" y="300" width="2" height="2" fill="#3e32be" opacity="0.56"/><rect x="748.1" y="302" width="2" height="3" fill="#3d32bd" opacity="0.44"/><rect x="748.1" y="305" width="2" height="2" fill="#3b31bc" opacity="0.56"/><rect x="748.1" y="307" width="2" height="2" fill="#3930bb" opacity="0.47"/><rect x="748.1" y="309" width="2" height="2" fill="#382fba" opacity="0.56"/><rect x="748.1" y="311" width="2" height="1" fill="#372fb9" opacity="0.50"/><rect x="748.1" y="312" width="2" height="2" fill="#362eb9" opacity="0.48"/><rect x="748.1" y="314" width="2" height="3" fill="#342eb8" opacity="0.48"/><rect x="748.1" y="317" width="2" height="3" fill="#322db6" opacity="0.41"/><rect x="748.1" y="320" width="2" height="1" fill="#302cb5" opacity="0.36"/><rect x="748.1" y="321" width="2" height="1" fill="#2f2bb5" opacity="0.42"/><rect x="748.1" y="322" width="2" height="2" fill="#2f2bb4" opacity="0.37"/><rect x="748.1" y="324" width="2" height="1" fill="#2d2ab3" opacity="0.34"/><rect x="748.1" y="325" width="2" height="2" fill="#2d2ab3" opacity="0.36"/><rect x="748.1" y="327" width="2" height="2" fill="#2b29b2" opacity="0.41"/><rect x="748.1" y="329" width="2" height="3" fill="#2a29b1" opacity="0.44"/></g>
<g filter="url(#b1)"><rect x="486.4" y="248" width="4.5" height="2" fill="#b05070" opacity="0.78"/><rect x="486.4" y="250" width="4.5" height="1" fill="#ab4d76" opacity="0.68"/><rect x="486.4" y="251" width="4.5" height="1" fill="#a94c7a" opacity="0.99"/><rect x="486.4" y="252" width="4.5" height="3" fill="#a64b7d" opacity="0.86"/><rect x="486.4" y="255" width="4.5" height="1" fill="#a04888" opacity="0.70"/><rect x="486.4" y="256" width="4.5" height="3" fill="#9d468b" opacity="0.86"/><rect x="486.4" y="259" width="4.5" height="3" fill="#964395" opacity="0.56"/><rect x="486.4" y="262" width="4.5" height="3" fill="#9040a0" opacity="0.60"/><rect x="486.4" y="265" width="4.5" height="1" fill="#8c3ca0" opacity="0.62"/><rect x="486.4" y="266" width="4.5" height="1" fill="#8b3ba0" opacity="0.56"/><rect x="486.4" y="267" width="4.5" height="2" fill="#8939a0" opacity="0.79"/><rect x="486.4" y="269" width="4.5" height="2" fill="#8737a0" opacity="0.75"/><rect x="486.4" y="271" width="4.5" height="3" fill="#8434a0" opacity="0.76"/><rect x="486.4" y="274" width="4.5" height="2" fill="#8131a0" opacity="0.59"/><rect x="486.4" y="276" width="4.5" height="2" fill="#7e30a0" opacity="0.50"/><rect x="486.4" y="278" width="4.5" height="1" fill="#7a30a1" opacity="0.52"/><rect x="486.4" y="279" width="4.5" height="2" fill="#7830a2" opacity="0.77"/><rect x="486.4" y="281" width="4.5" height="2" fill="#7430a3" opacity="0.79"/><rect x="486.4" y="283" width="4.5" height="2" fill="#7030a5" opacity="0.51"/><rect x="486.4" y="285" width="4.5" height="3" fill="#6c30a6" opacity="0.55"/><rect x="486.4" y="288" width="4.5" height="2" fill="#6730a8" opacity="0.56"/><rect x="486.9" y="290" width="3.5" height="3" fill="#6330a9" opacity="0.58"/><rect x="486.9" y="293" width="3.5" height="1" fill="#5d30ab" opacity="0.69"/><rect x="486.9" y="294" width="3.5" height="3" fill="#5b30ac" opacity="0.72"/><rect x="486.9" y="297" width="3.5" height="2" fill="#5530ae" opacity="0.58"/><rect x="486.9" y="299" width="3.5" height="2" fill="#5130af" opacity="0.64"/><rect x="486.9" y="301" width="3.5" height="3" fill="#4e2fb0" opacity="0.58"/><rect x="486.9" y="304" width="3.5" height="1" fill="#4b2fb0" opacity="0.55"/><rect x="486.9" y="305" width="3.5" height="2" fill="#4a2eb0" opacity="0.41"/><rect x="486.9" y="307" width="3.5" height="1" fill="#482eb0" opacity="0.40"/><rect x="486.9" y="308" width="3.5" height="2" fill="#472eb0" opacity="0.46"/><rect x="486.9" y="310" width="3.5" height="2" fill="#442db0" opacity="0.56"/><rect x="486.9" y="312" width="3.5" height="1" fill="#422db0" opacity="0.36"/><rect x="486.9" y="313" width="3.5" height="1" fill="#412db0" opacity="0.54"/><rect x="486.9" y="314" width="3.5" height="1" fill="#402cb0" opacity="0.36"/><rect x="486.9" y="315" width="3.5" height="2" fill="#3f2cb0" opacity="0.39"/><rect x="486.9" y="317" width="3.5" height="1" fill="#3d2cb0" opacity="0.57"/><rect x="486.9" y="318" width="3.5" height="3" fill="#3c2cb0" opacity="0.36"/><rect x="486.9" y="321" width="3.5" height="2" fill="#382bb0" opacity="0.37"/><rect x="486.9" y="323" width="3.5" height="1" fill="#362ab0" opacity="0.32"/><rect x="486.9" y="324" width="3.5" height="1" fill="#352ab0" opacity="0.52"/><rect x="486.9" y="325" width="3.5" height="2" fill="#342ab0" opacity="0.43"/><rect x="486.9" y="327" width="3.5" height="2" fill="#322ab0" opacity="0.33"/><rect x="486.9" y="329" width="3.5" height="2" fill="#2f29b0" opacity="0.37"/><rect x="486.9" y="331" width="3.5" height="2" fill="#2d29b0" opacity="0.39"/><rect x="486.9" y="333" width="3.5" height="1" fill="#2b28b0" opacity="0.37"/><rect x="486.9" y="334" width="3.5" height="2" fill="#2a28b0" opacity="0.29"/></g>
<g filter="url(#b2)"><ellipse cx="749.5" cy="183" rx="2.2" ry="14" fill="#ffa020"/><ellipse cx="751" cy="183.5" rx="4.5" ry="3.6" fill="#fff"/></g>
<rect x="52" y="760" width="1" height="20" fill="#fff"/>
<text class="sans" font-size="10.7" fill="#fff" transform="translate(49.1 778) rotate(-90)">2025-11-08 05:51:20</text>
<rect x="167" y="760" width="1" height="20" fill="#fff"/>
<text class="sans" font-size="10.7" fill="#fff" transform="translate(164.1 778) rotate(-90)">2025-11-08 05:51:30</text>
<rect x="273" y="760" width="1" height="20" fill="#fff"/>
<text class="sans" font-size="10.7" fill="#fff" transform="translate(270.1 778) rotate(-90)">2025-11-08 05:51:40</text>
<rect x="387" y="760" width="1" height="20" fill="#fff"/>
<text class="sans" font-size="10.7" fill="#fff" transform="translate(384.1 778) rotate(-90)">2025-11-08 05:51:50</text>
<rect x="493" y="760" width="1" height="20" fill="#fff"/>
<text class="sans" font-size="10.7" fill="#fff" transform="translate(490.1 778) rotate(-90)">2025-11-08 05:52:00</text>
<rect x="598" y="760" width="1" height="20" fill="#fff"/>
<text class="sans" font-size="10.7" fill="#fff" transform="translate(595.1 778) rotate(-90)">2025-11-08 05:52:10</text>
<rect x="704" y="760" width="1" height="20" fill="#fff"/>
<text class="sans" font-size="10.7" fill="#fff" transform="translate(701.1 778) rotate(-90)">2025-11-08 05:52:20</text>
<rect x="3" y="3" width="311" height="45" fill="#fff"/>
<text class="mono" font-size="11.667" fill="#111" stroke="#111" stroke-width="0.3"><tspan x="4" y="15">Screen Capture Time: 2025-11-08 05:52:33 UTC</tspan><tspan x="4" y="29">143048017 Hz</tspan><tspan x="4" y="42.5">Config = V8</tspan></text>
<rect x="5" y="53" width="99" height="39" fill="#fff"/>
<rect x="5" y="53" width="99" height="15" fill="url(#cbar)"/>
<rect x="9" y="68" width="1" height="5" fill="#000"/>
<rect x="13" y="68" width="1" height="5" fill="#000"/>
<rect x="18" y="68" width="1" height="5" fill="#000"/>
<rect x="22" y="68" width="1" height="5" fill="#000"/>
<rect x="26" y="68" width="1" height="8" fill="#000"/>
<rect x="31" y="68" width="1" height="5" fill="#000"/>
<rect x="35" y="68" width="1" height="5" fill="#000"/>
<rect x="40" y="68" width="1" height="5" fill="#000"/>
<rect x="44" y="68" width="1" height="5" fill="#000"/>
<rect x="48" y="68" width="1" height="11" fill="#000"/>
<rect x="53" y="68" width="1" height="5" fill="#000"/>
<rect x="57" y="68" width="1" height="5" fill="#000"/>
<rect x="62" y="68" width="1" height="5" fill="#000"/>
<rect x="66" y="68" width="1" height="5" fill="#000"/>
<rect x="70" y="68" width="1" height="8" fill="#000"/>
<rect x="75" y="68" width="1" height="5" fill="#000"/>
<rect x="79" y="68" width="1" height="5" fill="#000"/>
<rect x="84" y="68" width="1" height="5" fill="#000"/>
<rect x="88" y="68" width="1" height="5" fill="#000"/>
<rect x="92" y="68" width="1" height="11" fill="#000"/>
<rect x="97" y="68" width="1" height="5" fill="#000"/>
<rect x="101" y="68" width="1" height="5" fill="#000"/>
<text class="sans" font-size="11" fill="#000" stroke="#000" stroke-width="0.25" y="90"><tspan x="4.5">-80 dB</tspan><tspan x="39.5">-60</tspan><tspan x="83.5">-40</tspan></text>
<rect x="818" y="2" width="8" height="1" fill="#000"/>
<rect x="818" y="10" width="8" height="1" fill="#000"/>
<rect x="818" y="18" width="11" height="1" fill="#000"/>
<rect x="818" y="25" width="8" height="1" fill="#000"/>
<rect x="818" y="33" width="8" height="1" fill="#000"/>
<rect x="818" y="41" width="8" height="1" fill="#000"/>
<rect x="818" y="49" width="8" height="1" fill="#000"/>
<rect x="818" y="57" width="8" height="1" fill="#000"/>
<rect x="818" y="64" width="8" height="1" fill="#000"/>
<rect x="818" y="72" width="8" height="1" fill="#000"/>
<rect x="818" y="80" width="8" height="1" fill="#000"/>
<rect x="818" y="88" width="8" height="1" fill="#000"/>
<rect x="818" y="96" width="26" height="1" fill="#000"/>
<rect x="818" y="103" width="8" height="1" fill="#000"/>
<rect x="818" y="111" width="8" height="1" fill="#000"/>
<rect x="818" y="119" width="8" height="1" fill="#000"/>
<rect x="818" y="127" width="8" height="1" fill="#000"/>
<rect x="818" y="135" width="8" height="1" fill="#000"/>
<rect x="818" y="142" width="8" height="1" fill="#000"/>
<rect x="818" y="150" width="8" height="1" fill="#000"/>
<rect x="818" y="158" width="8" height="1" fill="#000"/>
<rect x="818" y="166" width="8" height="1" fill="#000"/>
<rect x="818" y="174" width="11" height="1" fill="#000"/>
<rect x="818" y="181" width="8" height="1" fill="#000"/>
<rect x="818" y="189" width="8" height="1" fill="#000"/>
<rect x="818" y="197" width="8" height="1" fill="#000"/>
<rect x="818" y="205" width="8" height="1" fill="#000"/>
<rect x="818" y="213" width="8" height="1" fill="#000"/>
<rect x="818" y="220" width="8" height="1" fill="#000"/>
<rect x="818" y="228" width="8" height="1" fill="#000"/>
<rect x="818" y="236" width="8" height="1" fill="#000"/>
<rect x="818" y="244" width="8" height="1" fill="#000"/>
<rect x="818" y="252" width="26" height="1" fill="#000"/>
<rect x="818" y="259" width="8" height="1" fill="#000"/>
<rect x="818" y="267" width="8" height="1" fill="#000"/>
<rect x="818" y="275" width="8" height="1" fill="#000"/>
<rect x="818" y="283" width="8" height="1" fill="#000"/>
<rect x="818" y="291" width="8" height="1" fill="#000"/>
<rect x="818" y="298" width="8" height="1" fill="#000"/>
<rect x="818" y="306" width="8" height="1" fill="#000"/>
<rect x="818" y="314" width="8" height="1" fill="#000"/>
<rect x="818" y="322" width="8" height="1" fill="#000"/>
<rect x="818" y="330" width="11" height="1" fill="#000"/>
<rect x="818" y="337" width="8" height="1" fill="#000"/>
<rect x="818" y="345" width="8" height="1" fill="#000"/>
<rect x="818" y="353" width="8" height="1" fill="#000"/>
<rect x="818" y="361" width="8" height="1" fill="#000"/>
<rect x="818" y="369" width="8" height="1" fill="#000"/>
<rect x="818" y="376" width="8" height="1" fill="#000"/>
<rect x="818" y="384" width="8" height="1" fill="#000"/>
<rect x="818" y="392" width="8" height="1" fill="#000"/>
<rect x="818" y="400" width="8" height="1" fill="#000"/>
<rect x="818" y="408" width="26" height="1" fill="#000"/>
<rect x="818" y="415" width="8" height="1" fill="#000"/>
<rect x="818" y="423" width="8" height="1" fill="#000"/>
<rect x="818" y="431" width="8" height="1" fill="#000"/>
<rect x="818" y="439" width="8" height="1" fill="#000"/>
<rect x="818" y="447" width="8" height="1" fill="#000"/>
<rect x="818" y="454" width="8" height="1" fill="#000"/>
<rect x="818" y="462" width="8" height="1" fill="#000"/>
<rect x="818" y="470" width="8" height="1" fill="#000"/>
<rect x="818" y="478" width="8" height="1" fill="#000"/>
<rect x="818" y="486" width="11" height="1" fill="#000"/>
<rect x="818" y="493" width="8" height="1" fill="#000"/>
<rect x="818" y="501" width="8" height="1" fill="#000"/>
<rect x="818" y="509" width="8" height="1" fill="#000"/>
<rect x="818" y="517" width="8" height="1" fill="#000"/>
<rect x="818" y="525" width="8" height="1" fill="#000"/>
<rect x="818" y="532" width="8" height="1" fill="#000"/>
<rect x="818" y="540" width="8" height="1" fill="#000"/>
<rect x="818" y="548" width="8" height="1" fill="#000"/>
<rect x="818" y="556" width="8" height="1" fill="#000"/>
<rect x="818" y="564" width="26" height="1" fill="#000"/>
<rect x="818" y="571" width="8" height="1" fill="#000"/>
<rect x="818" y="579" width="8" height="1" fill="#000"/>
<rect x="818" y="587" width="8" height="1" fill="#000"/>
<rect x="818" y="595" width="8" height="1" fill="#000"/>
<rect x="818" y="603" width="8" height="1" fill="#000"/>
<rect x="818" y="610" width="8" height="1" fill="#000"/>
<rect x="818" y="618" width="8" height="1" fill="#000"/>
<rect x="818" y="626" width="8" height="1" fill="#000"/>
<rect x="818" y="634" width="8" height="1" fill="#000"/>
<rect x="818" y="642" width="11" height="1" fill="#000"/>
<rect x="818" y="649" width="8" height="1" fill="#000"/>
<rect x="818" y="657" width="8" height="1" fill="#000"/>
<rect x="818" y="665" width="8" height="1" fill="#000"/>
<rect x="818" y="673" width="8" height="1" fill="#000"/>
<rect x="818" y="681" width="8" height="1" fill="#000"/>
<rect x="818" y="688" width="8" height="1" fill="#000"/>
<rect x="818" y="696" width="8" height="1" fill="#000"/>
<rect x="818" y="704" width="8" height="1" fill="#000"/>
<rect x="818" y="712" width="8" height="1" fill="#000"/>
<rect x="818" y="720" width="26" height="1" fill="#000"/>
<rect x="818" y="727" width="8" height="1" fill="#000"/>
<rect x="818" y="735" width="8" height="1" fill="#000"/>
<rect x="818" y="743" width="8" height="1" fill="#000"/>
<rect x="818" y="751" width="8" height="1" fill="#000"/>
<rect x="818" y="759" width="8" height="1" fill="#000"/>
<rect x="818" y="766" width="8" height="1" fill="#000"/>
<rect x="818" y="774" width="8" height="1" fill="#000"/>
<path d="M823 8.2 L839.5 16.5 M839.5 13 L839.5 772.5 L822 781.5" fill="none" stroke="#14148e" stroke-width="1"/>
<text class="mono" font-size="11.667" fill="#4a4a4a" transform="translate(848.5 64.5) rotate(90)">143050400</text>
<text class="mono" font-size="11.667" fill="#4a4a4a" transform="translate(848.5 220.5) rotate(90)">143050200</text>
<text class="mono" font-size="11.667" fill="#4a4a4a" transform="translate(848.5 376.5) rotate(90)">143050000</text>
<text class="mono" font-size="11.667" fill="#4a4a4a" transform="translate(848.5 532.5) rotate(90)">143049800</text>
<text class="mono" font-size="11.667" fill="#4a4a4a" transform="translate(848.5 678.0) rotate(90)">143049600 Hz</text>
<rect x="860" y="1" width="80" height="781" fill="#555"/>
<rect x="860" y="1" width="80" height="11" fill="#000"/>
<rect x="860" y="777" width="80" height="5" fill="#000"/>
<path fill="#000" d="M860 21h15v1h-15zM860 22h1v1h-1zM860 24h1v1h-1zM860 25h5v1h-5zM860 26h4v1h-4zM860 27h3v1h-3zM860 28h2v1h-2zM860 29h4v1h-4zM860 33h8v1h-8zM860 39h11v1h-11zM860 42h17v1h-17zM860 46h8v1h-8zM860 47h9v1h-9zM860 48h4v1h-4zM860 49h3v1h-3zM860 50h7v1h-7zM860 52h7v1h-7zM860 53h4v1h-4zM860 56h7v1h-7zM860 57h11v1h-11zM860 58h12v1h-12zM860 59h9v1h-9zM860 60h12v1h-12zM860 61h11v1h-11zM860 63h9v1h-9zM860 66h9v1h-9zM860 67h12v1h-12zM860 70h6v1h-6zM860 71h10v1h-10zM860 72h7v1h-7zM860 73h6v1h-6zM860 74h7v1h-7zM860 76h7v1h-7zM860 77h12v1h-12zM860 87h22v1h-22zM860 88h11v1h-11zM860 90h5v1h-5zM860 91h8v1h-8zM860 92h10v1h-10zM860 94h6v1h-6zM860 95h2v1h-2zM860 96h1v1h-1zM860 97h1v1h-1zM860 99h2v1h-2zM860 103h13v1h-13zM860 105h25v1h-25zM860 107h19v1h-19zM860 108h21v1h-21zM860 109h16v1h-16zM860 110h12v1h-12zM860 111h14v1h-14zM860 112h6v1h-6zM860 117h8v1h-8zM860 119h9v1h-9zM860 120h11v1h-11zM860 121h13v1h-13zM860 122h10v1h-10zM860 123h13v1h-13zM860 126h5v1h-5zM860 127h7v1h-7zM860 130h2v1h-2zM860 131h3v1h-3zM860 133h10v1h-10zM860 134h13v1h-13zM860 135h9v1h-9zM860 136h9v1h-9zM860 137h11v1h-11zM860 138h17v1h-17zM860 139h13v1h-13zM860 140h12v1h-12zM860 141h13v1h-13zM860 142h9v1h-9zM860 144h3v1h-3zM860 146h7v1h-7zM860 148h9v1h-9zM860 149h7v1h-7zM860 150h12v1h-12zM860 151h19v1h-19zM860 154h18v1h-18zM860 159h3v1h-3zM860 160h1v1h-1zM860 164h11v1h-11zM860 166h6v1h-6zM860 169h5v1h-5zM860 170h2v1h-2zM860 174h12v1h-12zM860 175h7v1h-7zM860 176h4v1h-4zM860 177h7v1h-7zM860 179h12v1h-12zM860 180h12v1h-12zM860 181h13v1h-13zM860 184h4v1h-4zM860 185h5v1h-5zM860 187h23v1h-23zM860 188h20v1h-20zM860 190h20v1h-20zM860 191h14v1h-14zM860 192h10v1h-10zM860 193h10v1h-10zM860 194h11v1h-11zM860 196h7v1h-7zM860 197h10v1h-10zM860 198h3v1h-3zM860 199h4v1h-4zM860 205h2v1h-2zM860 206h2v1h-2zM860 208h4v1h-4zM860 209h14v1h-14zM860 210h12v1h-12zM860 211h11v1h-11zM860 212h12v1h-12zM860 213h6v1h-6zM860 219h7v1h-7zM860 220h15v1h-15zM860 221h18v1h-18zM860 222h16v1h-16zM860 223h14v1h-14zM860 224h13v1h-13zM860 225h15v1h-15zM860 226h15v1h-15zM860 227h5v1h-5zM860 228h6v1h-6zM860 229h8v1h-8zM860 231h7v1h-7zM860 234h13v1h-13zM860 235h14v1h-14zM860 236h8v1h-8zM860 237h9v1h-9zM860 238h9v1h-9zM860 240h4v1h-4zM860 241h6v1h-6zM860 242h6v1h-6zM860 243h21v1h-21zM860 244h18v1h-18zM860 245h7v1h-7zM860 246h8v1h-8zM860 248h7v1h-7zM860 249h4v1h-4zM860 255h2v1h-2zM860 256h1v1h-1zM860 258h6v1h-6zM860 259h3v1h-3zM860 261h3v1h-3zM860 262h7v1h-7zM860 263h3v1h-3zM860 265h5v1h-5zM860 266h8v1h-8zM860 268h13v1h-13zM860 271h5v1h-5zM860 272h5v1h-5zM860 273h4v1h-4zM860 274h8v1h-8zM860 275h7v1h-7zM860 276h5v1h-5zM860 277h5v1h-5zM860 278h12v1h-12zM860 279h12v1h-12zM860 280h14v1h-14zM860 282h13v1h-13zM860 284h7v1h-7zM860 285h7v1h-7zM860 286h8v1h-8zM860 287h6v1h-6zM860 289h11v1h-11zM860 293h9v1h-9zM860 294h12v1h-12zM860 295h7v1h-7zM860 296h6v1h-6zM860 299h13v1h-13zM860 301h11v1h-11zM860 302h13v1h-13zM860 303h18v1h-18zM860 304h18v1h-18zM860 305h26v1h-26zM860 306h6v1h-6zM860 308h6v1h-6zM860 309h13v1h-13zM860 310h16v1h-16zM860 311h13v1h-13zM860 313h16v1h-16zM860 315h24v1h-24zM860 316h26v1h-26zM860 320h19v1h-19zM860 322h13v1h-13zM860 323h20v1h-20zM860 325h13v1h-13zM860 326h14v1h-14zM860 327h15v1h-15zM860 328h17v1h-17zM860 331h12v1h-12zM860 333h16v1h-16zM860 335h12v1h-12zM860 336h9v1h-9zM860 337h10v1h-10zM860 339h7v1h-7zM860 342h15v1h-15zM860 344h6v1h-6zM860 345h12v1h-12zM860 346h15v1h-15zM860 347h18v1h-18zM860 349h12v1h-12zM860 352h22v1h-22zM860 355h11v1h-11zM860 356h10v1h-10zM860 357h8v1h-8zM860 358h12v1h-12zM860 359h11v1h-11zM860 360h9v1h-9zM860 361h15v1h-15zM860 362h8v1h-8zM860 364h15v1h-15zM860 365h14v1h-14zM860 367h21v1h-21zM860 368h25v1h-25zM860 370h22v1h-22zM860 371h28v1h-28zM860 372h12v1h-12zM860 373h17v1h-17zM860 375h9v1h-9zM860 376h11v1h-11zM860 378h14v1h-14zM860 379h6v1h-6zM860 380h7v1h-7zM860 382h8v1h-8zM860 383h5v1h-5zM860 384h10v1h-10zM860 385h6v1h-6zM860 390h13v1h-13zM860 392h18v1h-18zM860 393h18v1h-18zM860 394h20v1h-20zM860 395h18v1h-18zM860 397h6v1h-6zM860 398h15v1h-15zM860 399h14v1h-14zM860 400h14v1h-14zM860 403h15v1h-15zM860 404h12v1h-12zM860 406h21v1h-21zM860 407h13v1h-13zM860 408h17v1h-17zM860 409h16v1h-16zM860 410h16v1h-16zM860 411h18v1h-18zM860 412h13v1h-13zM860 413h12v1h-12zM860 415h9v1h-9zM860 420h9v1h-9zM860 421h17v1h-17zM860 423h11v1h-11zM860 424h15v1h-15zM860 426h12v1h-12zM860 427h21v1h-21zM860 428h20v1h-20zM860 429h23v1h-23zM860 431h17v1h-17zM860 433h14v1h-14zM860 434h18v1h-18zM860 437h17v1h-17zM860 442h16v1h-16zM860 443h18v1h-18zM860 444h18v1h-18zM860 445h14v1h-14zM860 446h11v1h-11zM860 447h8v1h-8zM860 448h8v1h-8zM860 449h10v1h-10zM860 452h22v1h-22zM860 456h15v1h-15zM860 457h15v1h-15zM860 458h21v1h-21zM860 459h10v1h-10zM860 461h12v1h-12zM860 463h11v1h-11zM860 464h8v1h-8zM860 465h14v1h-14zM860 469h12v1h-12zM860 471h19v1h-19zM860 474h7v1h-7zM860 477h13v1h-13zM860 480h21v1h-21zM860 481h23v1h-23zM860 482h14v1h-14zM860 483h14v1h-14zM860 484h13v1h-13zM860 487h10v1h-10zM860 488h4v1h-4zM860 492h13v1h-13zM860 494h13v1h-13zM860 497h13v1h-13zM860 498h10v1h-10zM860 500h5v1h-5zM860 501h8v1h-8zM860 502h15v1h-15zM860 503h14v1h-14zM860 504h15v1h-15zM860 505h17v1h-17zM860 507h14v1h-14zM860 508h13v1h-13zM860 512h22v1h-22zM860 513h13v1h-13zM860 514h16v1h-16zM860 516h16v1h-16zM860 517h14v1h-14zM860 518h9v1h-9zM860 520h12v1h-12zM860 521h14v1h-14zM860 522h10v1h-10zM860 523h12v1h-12zM860 524h13v1h-13zM860 525h14v1h-14zM860 526h12v1h-12zM860 527h11v1h-11zM860 528h10v1h-10zM860 529h9v1h-9zM860 530h9v1h-9zM860 531h15v1h-15zM860 532h13v1h-13zM860 533h13v1h-13zM860 535h15v1h-15zM860 536h9v1h-9zM860 537h6v1h-6zM860 538h12v1h-12zM860 539h12v1h-12zM860 541h15v1h-15zM860 542h17v1h-17zM860 543h13v1h-13zM860 544h15v1h-15zM860 546h7v1h-7zM860 547h10v1h-10zM860 548h8v1h-8zM860 549h9v1h-9zM860 551h13v1h-13zM860 552h10v1h-10zM860 553h12v1h-12zM860 554h12v1h-12zM860 555h5v1h-5zM860 556h8v1h-8zM860 559h14v1h-14zM860 560h14v1h-14zM860 561h13v1h-13zM860 562h17v1h-17zM860 563h18v1h-18zM860 564h17v1h-17zM860 567h20v1h-20zM860 569h15v1h-15zM860 570h16v1h-16zM860 574h19v1h-19zM860 575h20v1h-20zM860 577h20v1h-20zM860 579h23v1h-23zM860 580h14v1h-14zM860 581h14v1h-14zM860 583h11v1h-11zM860 584h7v1h-7zM860 585h14v1h-14zM860 586h13v1h-13zM860 591h22v1h-22zM860 593h21v1h-21zM860 598h25v1h-25zM860 601h24v1h-24zM860 603h8v1h-8zM860 605h11v1h-11zM860 606h15v1h-15zM860 608h15v1h-15zM860 609h14v1h-14zM860 611h9v1h-9zM860 612h11v1h-11zM860 613h14v1h-14zM860 614h1v1h-1zM860 615h20v1h-20zM860 617h21v1h-21zM860 619h23v1h-23zM860 620h19v1h-19zM860 621h16v1h-16zM860 622h14v1h-14zM860 624h14v1h-14zM860 625h13v1h-13zM860 626h18v1h-18zM860 628h16v1h-16zM860 630h17v1h-17zM860 631h10v1h-10zM860 632h12v1h-12zM860 634h10v1h-10zM860 635h12v1h-12zM860 636h13v1h-13zM860 637h13v1h-13zM860 638h6v1h-6zM860 639h8v1h-8zM860 640h7v1h-7zM860 641h6v1h-6zM860 642h13v1h-13zM860 643h14v1h-14zM860 646h17v1h-17zM860 647h20v1h-20zM860 651h15v1h-15zM860 654h15v1h-15zM860 655h18v1h-18zM860 657h16v1h-16zM860 658h13v1h-13zM860 659h24v1h-24zM860 660h22v1h-22zM860 662h15v1h-15zM860 663h17v1h-17zM860 664h17v1h-17zM860 665h16v1h-16zM860 669h4v1h-4zM860 670h2v1h-2zM860 672h11v1h-11zM860 677h13v1h-13zM860 678h14v1h-14zM860 679h12v1h-12zM860 680h10v1h-10zM860 682h8v1h-8zM860 686h17v1h-17zM860 687h9v1h-9zM860 689h10v1h-10zM860 690h13v1h-13zM860 692h9v1h-9zM860 693h8v1h-8zM860 695h8v1h-8zM860 697h10v1h-10zM860 699h10v1h-10zM860 700h8v1h-8zM860 702h27v1h-27zM860 703h25v1h-25zM860 704h22v1h-22zM860 706h25v1h-25zM860 707h6v1h-6zM860 708h6v1h-6zM860 709h8v1h-8zM860 710h7v1h-7zM860 711h17v1h-17zM860 714h3v1h-3zM860 716h8v1h-8zM860 719h9v1h-9zM860 720h11v1h-11zM860 721h15v1h-15zM860 722h12v1h-12zM860 723h13v1h-13zM860 724h12v1h-12zM860 725h13v1h-13zM860 728h20v1h-20zM860 729h18v1h-18zM860 731h17v1h-17zM860 732h16v1h-16zM860 734h14v1h-14zM860 735h15v1h-15zM860 736h19v1h-19zM860 739h18v1h-18zM860 741h9v1h-9zM860 746h20v1h-20zM860 747h21v1h-21zM860 749h19v1h-19zM860 750h21v1h-21zM860 751h14v1h-14zM860 752h17v1h-17zM860 753h15v1h-15zM860 754h17v1h-17zM860 755h6v1h-6zM860 756h11v1h-11zM860 758h8v1h-8zM860 759h13v1h-13zM860 760h14v1h-14zM860 761h16v1h-16zM860 762h14v1h-14zM860 764h5v1h-5zM860 766h8v1h-8zM860 767h13v1h-13zM860 768h15v1h-15zM860 769h16v1h-16zM860 771h26v1h-26zM860 772h12v1h-12zM860 773h12v1h-12zM860 775h12v1h-12zM860 776h19v1h-19z"/>
<path fill="#06061a" d="M860 19h17v1h-17zM860 20h17v1h-17zM860 30h1v1h-1zM860 31h8v1h-8zM860 34h12v1h-12zM860 35h10v1h-10zM860 36h8v1h-8zM860 37h14v1h-14zM860 38h10v1h-10zM860 40h7v1h-7zM860 45h15v1h-15zM860 51h5v1h-5zM860 62h9v1h-9zM860 64h10v1h-10zM860 65h12v1h-12zM860 68h8v1h-8zM860 69h5v1h-5zM860 75h9v1h-9zM860 78h10v1h-10zM860 79h10v1h-10zM860 80h14v1h-14zM860 81h11v1h-11zM860 82h2v1h-2zM860 86h11v1h-11zM860 89h9v1h-9zM860 93h12v1h-12zM860 104h21v1h-21zM860 106h23v1h-23zM860 113h6v1h-6zM860 118h5v1h-5zM860 124h9v1h-9zM860 125h4v1h-4zM860 128h6v1h-6zM860 143h2v1h-2zM860 145h2v1h-2zM860 147h14v1h-14zM860 153h20v1h-20zM860 158h1v1h-1zM860 162h1v1h-1zM860 165h4v1h-4zM860 173h1v1h-1zM860 178h12v1h-12zM860 182h12v1h-12zM860 183h3v1h-3zM860 195h10v1h-10zM860 200h9v1h-9zM860 201h11v1h-11zM860 207h4v1h-4zM860 214h3v1h-3zM860 215h15v1h-15zM860 218h4v1h-4zM860 230h7v1h-7zM860 232h9v1h-9zM860 233h15v1h-15zM860 239h9v1h-9zM860 247h4v1h-4zM860 250h13v1h-13zM860 257h4v1h-4zM860 260h6v1h-6zM860 264h5v1h-5zM860 267h5v1h-5zM860 269h11v1h-11zM860 270h4v1h-4zM860 281h11v1h-11zM860 283h13v1h-13zM860 288h7v1h-7zM860 290h8v1h-8zM860 291h11v1h-11zM860 292h11v1h-11zM860 297h3v1h-3zM860 298h5v1h-5zM860 300h3v1h-3zM860 307h6v1h-6zM860 312h15v1h-15zM860 317h20v1h-20zM860 319h19v1h-19zM860 329h16v1h-16zM860 330h20v1h-20zM860 332h11v1h-11zM860 334h11v1h-11zM860 338h7v1h-7zM860 340h14v1h-14zM860 343h4v1h-4zM860 348h11v1h-11zM860 350h15v1h-15zM860 351h12v1h-12zM860 353h18v1h-18zM860 363h7v1h-7zM860 366h24v1h-24zM860 374h9v1h-9zM860 377h11v1h-11zM860 381h8v1h-8zM860 386h4v1h-4zM860 387h13v1h-13zM860 388h14v1h-14zM860 389h12v1h-12zM860 396h15v1h-15zM860 401h12v1h-12zM860 405h15v1h-15zM860 414h16v1h-16zM860 416h7v1h-7zM860 417h11v1h-11zM860 418h10v1h-10zM860 419h7v1h-7zM860 425h13v1h-13zM860 430h14v1h-14zM860 435h17v1h-17zM860 436h19v1h-19zM860 438h24v1h-24zM860 441h21v1h-21zM860 450h17v1h-17zM860 453h15v1h-15zM860 454h19v1h-19zM860 460h13v1h-13zM860 462h10v1h-10zM860 466h14v1h-14zM860 467h15v1h-15zM860 468h15v1h-15zM860 472h12v1h-12zM860 473h5v1h-5zM860 475h16v1h-16zM860 485h15v1h-15zM860 486h17v1h-17zM860 489h7v1h-7zM860 490h18v1h-18zM860 491h14v1h-14zM860 493h11v1h-11zM860 495h12v1h-12zM860 496h10v1h-10zM860 499h12v1h-12zM860 506h15v1h-15zM860 509h15v1h-15zM860 510h17v1h-17zM860 511h17v1h-17zM860 515h15v1h-15zM860 519h13v1h-13zM860 534h15v1h-15zM860 540h16v1h-16zM860 550h11v1h-11zM860 557h6v1h-6zM860 558h15v1h-15zM860 565h17v1h-17zM860 566h19v1h-19zM860 568h16v1h-16zM860 571h15v1h-15zM860 572h17v1h-17zM860 573h23v1h-23zM860 576h21v1h-21zM860 578h23v1h-23zM860 582h10v1h-10zM860 587h17v1h-17zM860 595h26v1h-26zM860 599h16v1h-16zM860 600h17v1h-17zM860 602h22v1h-22zM860 604h14v1h-14zM860 607h15v1h-15zM860 610h12v1h-12zM860 616h20v1h-20zM860 618h18v1h-18zM860 623h13v1h-13zM860 627h20v1h-20zM860 633h18v1h-18zM860 644h13v1h-13zM860 650h16v1h-16zM860 652h17v1h-17zM860 653h14v1h-14zM860 656h15v1h-15zM860 661h14v1h-14zM860 666h15v1h-15zM860 667h14v1h-14zM860 668h5v1h-5zM860 671h3v1h-3zM860 673h22v1h-22zM860 675h12v1h-12zM860 676h13v1h-13zM860 681h10v1h-10zM860 683h6v1h-6zM860 684h6v1h-6zM860 685h12v1h-12zM860 691h13v1h-13zM860 694h10v1h-10zM860 696h6v1h-6zM860 698h8v1h-8zM860 701h30v1h-30zM860 705h24v1h-24zM860 712h5v1h-5zM860 713h7v1h-7zM860 715h7v1h-7zM860 717h10v1h-10zM860 718h10v1h-10zM860 726h9v1h-9zM860 727h13v1h-13zM860 733h18v1h-18zM860 738h22v1h-22zM860 742h9v1h-9zM860 743h5v1h-5zM860 744h10v1h-10zM860 745h7v1h-7zM860 748h18v1h-18zM860 757h8v1h-8zM860 763h17v1h-17zM860 765h10v1h-10zM860 770h16v1h-16zM860 774h14v1h-14z"/>
<path fill="#0c0c48" d="M860 32h17v1h-17zM860 41h19v1h-19zM860 44h18v1h-18zM860 152h20v1h-20zM860 155h17v1h-17zM860 186h22v1h-22zM860 189h22v1h-22zM860 314h20v1h-20zM860 318h19v1h-19zM860 321h16v1h-16zM860 324h20v1h-20zM860 341h16v1h-16zM860 354h18v1h-18zM860 369h19v1h-19zM860 391h18v1h-18zM860 402h17v1h-17zM860 422h18v1h-18zM860 432h16v1h-16zM860 439h20v1h-20zM860 440h22v1h-22zM860 451h18v1h-18zM860 455h16v1h-16zM860 470h17v1h-17zM860 476h20v1h-20zM860 478h17v1h-17zM860 479h20v1h-20zM860 545h17v1h-17zM860 588h17v1h-17zM860 589h19v1h-19zM860 590h21v1h-21zM860 592h19v1h-19zM860 594h21v1h-21zM860 596h23v1h-23zM860 597h24v1h-24zM860 629h20v1h-20zM860 645h17v1h-17zM860 648h20v1h-20zM860 649h18v1h-18zM860 674h22v1h-22zM860 688h17v1h-17zM860 730h21v1h-21zM860 737h18v1h-18zM860 740h22v1h-22z"/>
<rect x="860" y="29" width="17" height="2" fill="#0c0c48"/>
<rect x="860" y="56" width="24" height="3" fill="#0c0c48"/>
<rect x="860" y="86" width="19" height="2" fill="#0c0c48"/>
<rect x="860" y="101" width="16" height="2" fill="#0c0c48"/>
<rect x="860" y="200" width="20" height="3" fill="#0c0c48"/>
<rect x="860" y="204" width="17" height="3" fill="#0c0c48"/>
<rect x="860" y="245" width="22" height="2" fill="#0c0c48"/>
<rect x="860" y="275" width="16" height="2" fill="#0c0c48"/>
<rect x="860" y="18" width="80" height="1" fill="#9a9a9a" opacity="0.9"/>
<rect x="860" y="96" width="80" height="1" fill="#9a9a9a" opacity="0.9"/>
<rect x="860" y="174" width="80" height="1" fill="#9a9a9a" opacity="0.9"/>
<rect x="860" y="252" width="80" height="1" fill="#9a9a9a" opacity="0.9"/>
<rect x="860" y="330" width="80" height="1" fill="#9a9a9a" opacity="0.9"/>
<rect x="860" y="408" width="80" height="1" fill="#9a9a9a" opacity="0.9"/>
<rect x="860" y="486" width="80" height="1" fill="#9a9a9a" opacity="0.9"/>
<rect x="860" y="564" width="80" height="1" fill="#9a9a9a" opacity="0.9"/>
<rect x="860" y="642" width="80" height="1" fill="#9a9a9a" opacity="0.9"/>
<rect x="860" y="720" width="80" height="1" fill="#9a9a9a" opacity="0.9"/>
<defs><clipPath id="pc"><rect x="860" y="1" width="80" height="781"/></clipPath></defs>
<g clip-path="url(#pc)">
<polyline points="860.6,2.6 860.6,16.6 864.4,20.4 869.5,24.3 872.7,30.6 874.0,38.3 872.7,46.0 875.2,51.0 873.3,55.0 875.2,61.3 875.2,71.5 877.2,81.7 877.2,89.4 879.0,95.0 880.4,102.7 881.0,120.5 881.0,136.0 883.5,146.0 887.4,156.3 889.3,167.8 892.5,174.8 900.0,180.0 906.5,182.5 914.2,183.8 906.5,185.7 897.6,188.2 896.3,190.0 897.6,192.6 899.5,195.1 895.0,200.2 881.0,216.8 881.0,227.0 878.4,238.5 873.3,248.7 874.6,255.0 872.7,266.6 870.8,279.4 870.8,290.0 870.9,293.0 869.2,295.0 870.6,299.0 870.1,301.0 871.6,304.0 871.9,307.0 870.0,311.0 870.4,313.0 870.3,316.0 871.1,320.0 871.1,323.0 870.6,327.0 872.7,330.0 873.5,332.0 872.1,335.0 868.8,338.0 869.7,341.0 873.1,344.0 873.1,347.0 871.1,351.0 872.0,354.0 871.5,357.0 871.9,360.0 871.6,362.0 872.0,365.0 871.7,368.0 871.0,372.0 870.4,376.0 873.4,379.0 872.7,381.0 871.6,384.0 871.0,388.0 869.6,391.0 871.9,395.0 870.9,397.0 869.6,400.0 870.7,402.0 868.6,406.0 868.2,409.0 870.0,412.0 872.0,416.0 872.3,419.0 873.8,422.0 872.4,424.0 870.7,427.0 872.1,430.0 871.1,433.0 872.6,435.0 871.1,438.0 870.3,440.0 870.6,443.0 870.0,447.0 870.6,450.0 870.5,454.0 871.0,456.0 872.3,459.0 871.1,463.0 870.6,465.0 870.5,469.0 871.4,472.0 872.0,476.0 872.0,479.0 871.8,481.0 870.5,485.0 871.9,488.0 871.1,492.0 870.2,495.0 870.9,499.0 872.4,502.0 872.6,505.0 871.9,509.0 870.8,513.0 869.7,516.0 870.5,519.0 871.2,521.0 869.4,523.0 869.5,526.0 871.7,529.0 871.0,533.0 873.8,536.0 871.1,539.0 870.0,541.0 870.0,545.0 870.5,548.0 870.6,552.0 872.0,555.0 871.2,558.0 872.0,562.0 871.8,565.0 871.0,569.0 872.2,572.0 871.0,575.0 872.2,578.0 869.4,582.0 869.9,585.0 869.2,589.0 868.7,592.0 868.7,596.0 869.1,599.0 869.2,602.0 870.9,604.0 872.2,607.0 871.4,610.0 870.5,612.0 871.4,616.0 871.1,619.0 870.8,621.0 871.5,624.0 870.3,626.0 871.3,628.0 871.2,631.0 873.2,633.0 871.0,636.0 871.5,640.0 870.7,642.0 869.7,644.0 871.7,647.0 871.9,650.0 873.1,653.0 871.1,657.0 871.6,661.0 869.9,664.0 871.5,668.0 872.2,672.0 872.7,675.0 871.2,678.0 870.4,680.0 871.4,683.0 869.7,686.0 869.1,690.0 869.8,694.0 870.9,697.0 871.9,701.0 871.1,704.0 871.0,707.0 870.2,710.0 873.1,714.0 871.9,717.0 871.8,721.0 871.0,723.0 869.6,725.0 868.4,728.0 870.8,731.0 871.1,735.0 869.7,737.0 870.8,740.0 871.1,744.0 870.3,747.0 870.6,750.0 870.1,754.0 868.7,758.0 870.1,760.0 870.8,762.0 873.0,764.7 869.5,768.6 865.7,772.4 860.6,777.5 860.6,781.0" fill="none" stroke="#c03838" stroke-width="1.25" stroke-linejoin="round"/>
<polyline points="860.6,3.8 870.8,6.4 879.7,7.9 887.4,9.6 891.2,12.8 895.0,13.4 901.4,18.5 909.0,23.6 913.0,26.8 913.0,32.0 916.7,37.0 917.4,51.0 916.7,53.6 920.6,70.2 923.0,78.0 927.0,93.2 928.2,97.0 928.9,102.7 931.4,130.8 932.7,144.8 936.0,152.5 939.0,164.0 945.0,175.0" fill="none" stroke="#40e040" stroke-width="1.0" stroke-linejoin="round"/>
<polyline points="945.0,204.0 939.7,208.5 933.4,212.3 925.7,215.5 924.4,218.0 925.0,227.0 927.0,229.6 925.0,233.4 914.2,246.2 913.0,250.0 910.4,253.9 902.7,260.2 909.0,264.0 909.0,270.5 905.3,273.0 902.7,279.4 905.3,284.5 902.0,287.0 904.6,290.0 900.0,296.5 896.3,298.4 892.5,300.3 885.5,306.0 892.5,311.2 888.7,313.7 890.0,318.2 885.5,321.4 887.4,325.9 893.8,329.0 888.7,331.6 892.5,334.2 883.5,341.2 887.4,345.0 881.6,351.4 888.7,355.2 882.3,360.4 888.0,366.7 884.2,371.8 887.4,379.5 883.0,384.0 881.6,388.0 886.5,392.0 882.9,395.0 887.7,399.0 882.0,401.0 888.4,405.0 883.6,409.0 888.7,412.0 881.3,414.0 888.0,417.0 882.2,420.0 887.4,423.0 881.7,427.0 886.5,430.0 883.2,432.0 885.8,434.0 883.3,436.0 890.7,439.0 884.8,441.0 889.1,443.0 883.0,445.0 888.4,448.0 885.4,450.0 888.1,452.0 884.0,454.0 887.4,458.0 883.0,460.0 886.3,462.0 882.2,465.0 887.7,467.0 882.9,471.0 885.4,475.0 882.8,477.0 885.9,480.0 882.5,483.0 888.0,486.0 883.9,488.0 888.5,490.0 883.8,492.0 887.7,495.0 882.6,497.0 888.8,500.0 882.5,502.0 889.4,504.0 882.7,506.0 886.7,509.0 882.6,513.0 886.2,516.0 882.5,519.0 887.1,522.0 883.8,526.0 886.0,528.0 883.7,530.0 888.7,533.0 882.7,535.0 887.8,538.0 882.5,541.0 887.0,543.0 882.3,546.0 887.3,549.0 882.9,551.0 888.9,553.0 884.6,556.0 887.4,558.0 882.7,560.0 887.0,563.0 884.7,565.0 886.9,567.0 881.4,570.0 886.8,572.0 883.2,575.0 886.2,577.0 883.4,581.0 888.5,584.0 883.9,587.0 885.1,589.0 879.8,592.0 885.4,594.0 884.9,597.0 887.9,599.0 882.6,601.0 886.7,604.0 883.2,606.0 886.1,610.0 881.4,613.0 885.4,615.0 880.9,617.0 885.8,620.0 881.6,623.0 886.0,625.0 879.6,628.0 885.7,630.0 881.1,633.0 887.4,636.0 882.8,638.0 887.3,642.0 883.4,644.0 888.4,646.0 881.5,648.0 884.3,651.0 882.4,654.0 887.3,656.0 881.4,658.0 886.4,661.0 884.4,663.0 888.6,666.0 884.9,669.0 886.7,673.0 880.9,675.0 887.4,678.0 883.2,680.0 887.2,683.0 883.1,685.0 887.5,687.0 882.2,689.0 886.1,691.0 882.8,693.0 887.7,696.0 883.7,699.0 885.3,701.0 882.2,703.0 885.0,706.0 882.4,710.0 885.8,713.0 883.1,715.0 885.7,719.0 882.6,722.0 886.1,724.0 882.1,726.0 888.2,728.0 882.4,731.0 887.9,733.0 880.9,736.0 887.7,740.0 883.0,742.0 885.1,746.0 881.0,748.0 886.3,752.0 882.8,755.0 888.7,759.0 884.8,764.7 881.0,768.0 877.2,772.4 873.3,776.2 868.2,781.3 866.0,784.0" fill="none" stroke="#40e040" stroke-width="1.0" stroke-linejoin="round"/>
<polyline points="945.0,772.0 939.7,777.5 936.0,781.3 934.0,784.0" fill="none" stroke="#40e040" stroke-width="1.0" stroke-linejoin="round"/>
<path d="M904 181.8 L914.6 182.6 L914.6 185.4 L904 186.2 Z" fill="#c03838"/>
<circle cx="928.3" cy="97.5" r="3.3" fill="#080000" stroke="#a03030" stroke-width="1.3"/>
</g>
</svg></body></html>
